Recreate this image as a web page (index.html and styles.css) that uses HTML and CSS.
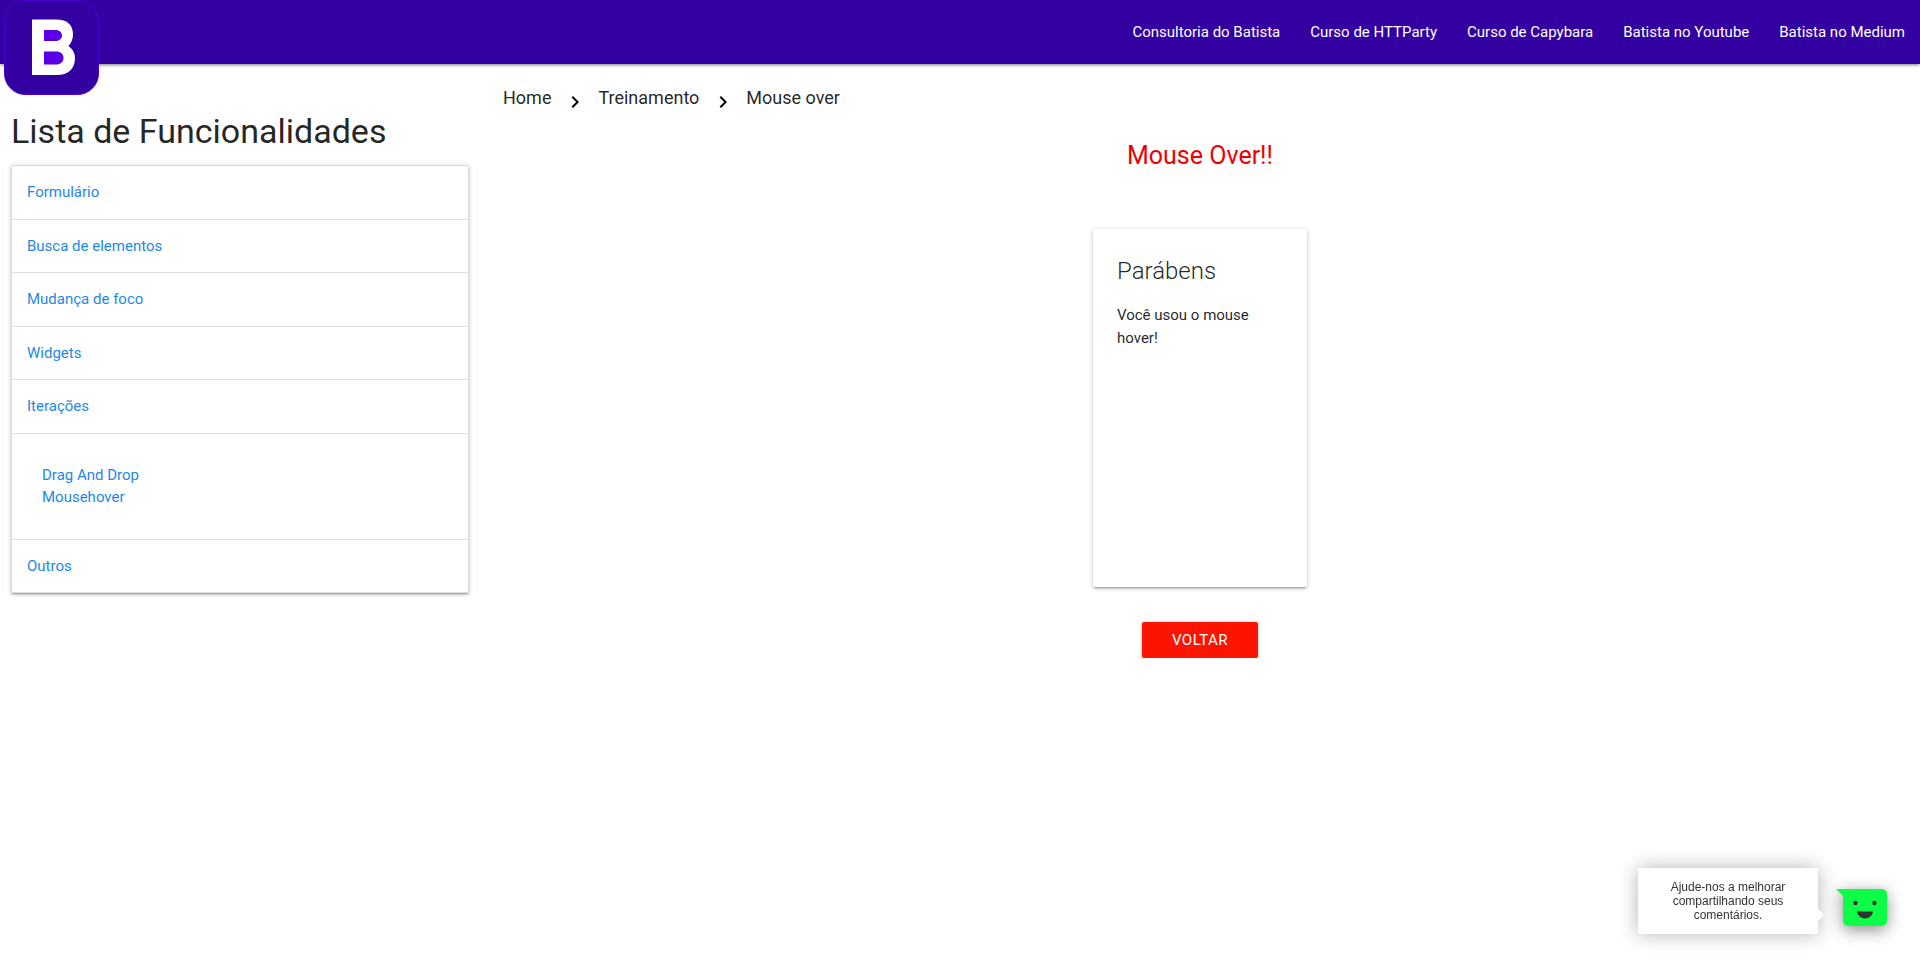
FILE: index.html
```html
<!DOCTYPE html>
<html lang="pt-BR">
<head>
<meta charset="utf-8">
<title>Mouse over</title>
<link rel="stylesheet" href="styles.css">
</head>
<body>
<header class="navbar">
  <a class="logo" href="#" aria-label="Batista">
    <svg class="logo-image" viewBox="0 0 96 96" aria-hidden="true">
      <rect x="0.5" y="0.5" width="94" height="94" rx="21" fill="#3300a2" stroke="#4a00d0" stroke-width="1"/>
      <path fill="#fff" d="M28 19.500h24c12 0 17 6 17 15 0 5-2 8.500-4.500 11.500 4 3 6.500 7 6.500 12 0 11-7 17-18 17H28z"/>
      <path fill="#5b00e6" d="M40 30h11c4 0 7 2 7 5.500S55 41 51 41H40zM40 51.500h12c4.500 0 7.500 2.500 7.500 6.500S56.500 64.500 52 64.500H40z"/>
    </svg>
  </a>
  <nav class="nav-links">
    <a href="#">Consultoria do Batista</a>
    <a href="#">Curso de HTTParty</a>
    <a href="#">Curso de Capybara</a>
    <a href="#">Batista no Youtube</a>
    <a href="#">Batista no Medium</a>
  </nav>
</header>
<div class="layout">
  <aside class="sidebar">
    <h1 class="sidebar-title">Lista de Funcionalidades</h1>
    <ul class="menu">
      <li class="menu-item"><a href="#">Formulário</a></li>
      <li class="menu-item"><a href="#">Busca de elementos</a></li>
      <li class="menu-item"><a href="#">Mudança de foco</a></li>
      <li class="menu-item"><a href="#">Widgets</a></li>
      <li class="menu-item"><a href="#">Iterações</a></li>
      <li class="menu-item menu-item-open">
        <ul class="submenu">
          <li><a href="#">Drag And Drop</a></li>
          <li><a href="#">Mousehover</a></li>
        </ul>
      </li>
      <li class="menu-item"><a href="#">Outros</a></li>
    </ul>
  </aside>
  <main class="content">
    <nav class="breadcrumbs" aria-label="Breadcrumb">
      <a href="#">Home</a>
      <svg class="chevron" viewBox="0 0 24 24" aria-hidden="true"><path d="M8.590 16.590 13.170 12 8.590 7.410 10 6l6 6-6 6z"/></svg>
      <a href="#">Treinamento</a>
      <svg class="chevron" viewBox="0 0 24 24" aria-hidden="true"><path d="M8.590 16.590 13.170 12 8.590 7.410 10 6l6 6-6 6z"/></svg>
      <a href="#">Mouse over</a>
    </nav>
    <h2 class="page-title">Mouse Over!!</h2>
    <section class="card">
      <h3 class="card-title">Parábens</h3>
      <p class="card-text">Você usou o mouse hover!</p>
    </section>
    <button class="back-button" type="button">VOLTAR</button>
  </main>
</div>
<div class="feedback">
  <p class="feedback-bubble">Ajude-nos a melhorar compartilhando seus comentários.</p>
  <button class="feedback-button" type="button" aria-label="Comentários">
    <svg class="feedback-icon" viewBox="0 0 52 37" aria-hidden="true">
      <path fill="#0cff46" d="M0 0H46a5 5 0 0 1 5 5V32a5 5 0 0 1-5 5H12a5 5 0 0 1-5-5V7z"/>
      <circle cx="19.500" cy="14" r="2.200" fill="#333"/>
      <circle cx="38.500" cy="14" r="2.200" fill="#333"/>
      <path fill="#333" d="M21 22.500H37c-.5 4-4 7-8 7s-7.500-3-8-7z"/>
    </svg>
  </button>
</div>
</body>
</html>
```
FILE: styles.css
```css
* {
  box-sizing: border-box;
}

body {
  margin: 0;
  font-family: Roboto, "Liberation Sans", sans-serif;
  font-size: 15px;
  line-height: 1.5;
  color: rgba(0, 0, 0, 0.87);
  background: #fff;
}

h1, h2, h3, p, ul {
  margin: 0;
  padding: 0;
  font-weight: 400;
}

ul {
  list-style: none;
}

a {
  color: #1e88e5;
  text-decoration: none;
}

.navbar {
  position: relative;
  display: flex;
  justify-content: space-between;
  height: 64px;
  padding-left: 4px;
  background: #3300a2;
  box-shadow: 0 2px 2px 0 rgba(0, 0, 0, 0.14), 0 3px 1px -2px rgba(0, 0, 0, 0.12), 0 1px 5px 0 rgba(0, 0, 0, 0.2);
}

.logo-image {
  display: block;
  width: 96px;
  height: 96px;
}

.nav-links {
  display: flex;
  line-height: 64px;
}

.nav-links a {
  padding: 0 15px;
  color: #fff;
}

.layout {
  display: grid;
  grid-template-columns: 1fr 3fr;
}

.sidebar {
  padding: 48px 11px 0;
}

.sidebar-title {
  margin-bottom: 15px;
  font-size: 34px;
  line-height: 38px;
}

.menu {
  border: 1px solid #ddd;
  border-radius: 2px;
  box-shadow: 0 2px 2px 0 rgba(0, 0, 0, 0.14), 0 3px 1px -2px rgba(0, 0, 0, 0.12), 0 1px 5px 0 rgba(0, 0, 0, 0.2);
}

.menu-item {
  padding: 15px;
  border-bottom: 1px solid #ddd;
}

.menu-item:last-child {
  border-bottom: 0;
}

.menu-item-open {
  padding: 30px;
}

.content {
  display: flex;
  flex-direction: column;
  align-items: center;
  padding: 16px 23px 0;
}

.breadcrumbs {
  display: flex;
  align-self: stretch;
  align-items: center;
  gap: 11px;
  font-size: 18px;
}

.breadcrumbs a {
  color: rgba(0, 0, 0, 0.87);
}

.chevron {
  width: 24px;
  height: 24px;
  margin: 10px 0 0 1px;
}

.page-title {
  margin-top: 28px;
  font-size: 25px;
  line-height: 27px;
  color: #f00000;
}

.card {
  width: 214px;
  min-height: 358px;
  margin-top: 60px;
  padding: 24px;
  border-radius: 2px;
  box-shadow: 0 2px 2px 0 rgba(0, 0, 0, 0.14), 0 3px 1px -2px rgba(0, 0, 0, 0.12), 0 1px 5px 0 rgba(0, 0, 0, 0.2);
}

.card-title {
  margin-bottom: 15px;
  font-size: 24px;
  font-weight: 300;
  line-height: 36px;
}

.back-button {
  height: 36px;
  margin-top: 35px;
  padding: 0 30px;
  border: 0;
  border-radius: 2px;
  font: inherit;
  letter-spacing: 0.5px;
  color: #fff;
  background: #fc1400;
  box-shadow: 0 2px 2px 0 rgba(0, 0, 0, 0.14), 0 3px 1px -2px rgba(0, 0, 0, 0.12), 0 1px 5px 0 rgba(0, 0, 0, 0.2);
}

.feedback {
  position: fixed;
  right: 32px;
  bottom: 26px;
  display: flex;
  align-items: center;
  gap: 18px;
}

.feedback-bubble {
  position: relative;
  width: 180px;
  padding: 12px 20px;
  border-radius: 3px;
  font-family: "Liberation Sans", Arial, sans-serif;
  font-size: 12px;
  line-height: 14px;
  text-align: center;
  color: #333;
  background: #fff;
  box-shadow: 0 0 20px rgba(0, 0, 0, 0.3);
}

.feedback-bubble::after {
  content: "";
  position: absolute;
  top: 41px;
  left: 100%;
  border: 6px solid transparent;
  border-left-color: #fff;
}

.feedback-button {
  padding: 0;
  border: 0;
  background: none;
}

.feedback-icon {
  display: block;
  width: 52px;
  height: 37px;
  margin-top: 12px;
  filter: drop-shadow(0 4px 8px rgba(0, 0, 0, 0.45));
  overflow: visible;
}
```
